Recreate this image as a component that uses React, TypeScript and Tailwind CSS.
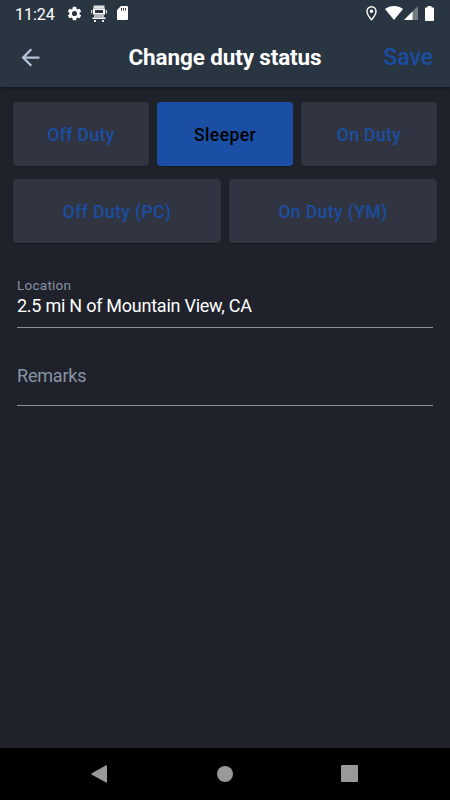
import { useState } from 'react';

const topRow = ['Off Duty', 'Sleeper', 'On Duty'];
const bottomRow = ['Off Duty (PC)', 'On Duty (YM)'];

interface DutyButtonProps {
  label: string;
  selected: boolean;
  onSelect: (label: string) => void;
}

function DutyButton({ label, selected, onSelect }: DutyButtonProps) {
  return (
    <button
      onClick={() => onSelect(label)}
      className={`h-16 flex-1 rounded-[4px] pt-[2px] text-[17.5px] font-medium tracking-[0.4px] shadow-[0_1px_1px_rgba(0,0,0,0.25)] ${
        selected ? 'bg-[#1a4fa5] text-black' : 'bg-[#303541] text-[#1b4ea2]'
      }`}
    >
      {label}
    </button>
  );
}

function StatusBar() {
  return (
    <div className="flex h-[26px] items-center pl-[15px] pr-4 text-white">
      <span className="w-[52px] pt-[3px] text-base leading-6">11:24</span>
      <svg className="-ml-px h-[17px] w-[17px]" viewBox="0 0 24 24" fill="currentColor">
        <path d="M19.14 12.94c.04-.3.06-.61.06-.94 0-.32-.02-.64-.07-.94l2.03-1.58a.49.49 0 0 0 .12-.61l-1.92-3.32a.49.49 0 0 0-.59-.22l-2.39.96c-.5-.38-1.03-.7-1.62-.94l-.36-2.54a.48.48 0 0 0-.48-.41h-3.84c-.24 0-.43.17-.47.41l-.36 2.54c-.59.24-1.13.57-1.62.94l-2.39-.96a.49.49 0 0 0-.59.22L2.74 8.87c-.12.21-.08.47.12.61l2.03 1.58c-.05.3-.09.63-.09.94s.02.64.07.94l-2.03 1.58a.49.49 0 0 0-.12.61l1.92 3.32c.12.22.37.29.59.22l2.39-.96c.5.38 1.03.7 1.62.94l.36 2.54c.05.24.24.41.48.41h3.84c.24 0 .44-.17.47-.41l.36-2.54c.59-.24 1.13-.56 1.62-.94l2.39.96c.22.08.47 0 .59-.22l1.92-3.32a.49.49 0 0 0-.12-.61zM12 15.6a3.6 3.6 0 1 1 0-7.2 3.6 3.6 0 0 1 0 7.2z" />
      </svg>
      {/* truck, seen from the front */}
      <svg className="ml-2 h-[17px] w-4" viewBox="0 0 16 17" fill="currentColor">
        <path d="M2.5 .5H13.5V3.5H2.5Z" opacity=".85" />
        <path d="M2 3.5H14V9.5H2ZM4 5V8H12V5Z" fillRule="evenodd" />
        <path d="M.2 5H1.2V8.5H.2ZM14.800 5H15.800V8.5H14.800Z" />
        <path d="M3 9.5H13V12.5H3Z" opacity=".65" />
        <path d="M1.5 12.5H14.5V14H1.5Z" />
        <path d="M3 15H5V17H3ZM11 15H13V17H11Z" opacity=".9" />
      </svg>
      <svg className="ml-[10px] h-[14px] w-[11px]" viewBox="0 0 11 14">
        <path d="M4 0H10a1 1 0 0 1 1 1V13a1 1 0 0 1-1 1H1a1 1 0 0 1-1-1V4Z" fill="currentColor" />
        <path d="M4.5 2V4.5M6.5 2V4.5M8.5 2V4.5" stroke="#293541" strokeWidth="1" />
      </svg>
      <svg className="ml-auto h-[15px] w-[11px]" viewBox="0 0 11 15" fill="none" stroke="currentColor">
        <path d="M5.5 .8A4.5 4.5 0 0 0 1 5.3C1 8.8 5.5 13.8 5.5 13.8S10 8.8 10 5.3A4.5 4.5 0 0 0 5.5 .8Z" strokeWidth="1.4" />
        <circle cx="5.5" cy="5.3" r="1.8" fill="currentColor" stroke="none" />
      </svg>
      <svg className="ml-[8px] h-[14px] w-[18px]" viewBox="0 0 18 14" fill="currentColor">
        <path d="M9 14L0 3C2.5 1 5.5 0 9 0s6.5 1 9 3Z" />
      </svg>
      <svg className="ml-[1px] h-[14px] w-[14px]" viewBox="0 0 14 14" fill="currentColor">
        <path d="M14 0V14H0Z" opacity=".35" />
        <path d="M8.5 5.5V14H0Z" />
      </svg>
      <svg className="ml-[7px] h-[15px] w-[9px]" viewBox="0 0 9 15" fill="currentColor">
        <path d="M2.5 0H6.5V1.5H8.3a.7.7 0 0 1 .7.7V14.3a.7.7 0 0 1-.7.7H.7a.7.7 0 0 1-.7-.7V2.2a.7.7 0 0 1 .7-.7H2.5Z" />
      </svg>
    </div>
  );
}

function App() {
  const [status, setStatus] = useState('Sleeper');

  return (
    <div className="flex h-[800px] w-[450px] flex-col overflow-hidden bg-[#1f222b] font-['Roboto','Liberation_Sans',sans-serif]">
      <header className="h-[87px] shrink-0 bg-[#293541] shadow-[0_1px_3px_rgba(0,0,0,0.45)]">
        <StatusBar />
        <div className="grid h-[62px] grid-cols-[1fr_auto_1fr] items-center px-[17px]">
          <button aria-label="Back" className="w-7 text-[#b5c4d8]">
            <svg className="h-[27px] w-[27px]" viewBox="0 0 24 24" fill="currentColor">
              <path d="M20 11H7.83l5.59-5.59L12 4l-8 8 8 8 1.41-1.41L7.83 13H20z" />
            </svg>
          </button>
          <h1 className="text-[22.5px] font-bold leading-7 tracking-[-0.13px] text-white">Change duty status</h1>
          <button className="justify-self-end pt-[2px] text-[23px] font-medium leading-7 text-[#1b4ea2]">Save</button>
        </div>
      </header>

      <main className="flex-1">
        <div className="flex flex-col gap-[13px] px-[13px] pt-[15px]">
          {[topRow, bottomRow].map((row) => (
            <div key={row[0]} className="flex gap-2">
              {row.map((label) => (
                <DutyButton key={label} label={label} selected={status === label} onSelect={setStatus} />
              ))}
            </div>
          ))}
        </div>

        <div className="mx-[17px] mt-[34px] h-[51px] border-b border-[#8f9093]">
          <div className="text-[13.5px] leading-4 tracking-[0.25px] text-[#8793a3]">Location</div>
          <div className="pt-px text-[18px] leading-6 tracking-[-0.25px] text-white">2.5 mi N of Mountain View, CA</div>
        </div>
        <div className="mx-[17px] mt-[36px] h-[42px] border-b border-[#8f9093] text-[18px] leading-6 tracking-[-0.2px] text-[#8793a3]">
          Remarks
        </div>
      </main>

      <nav className="grid h-[52px] shrink-0 grid-cols-3 items-center bg-black px-[37px] pb-px text-[#999999]">
        <svg className="ml-[54px] h-[18px] w-4" viewBox="0 0 16 18" fill="currentColor">
          <path d="M15 .2Q16 0 16 1V17Q16 18 15 17.5L.5 9.5Q0 9 .5 8.5Z" />
        </svg>
        <div className="h-4 w-4 justify-self-center rounded-full bg-[#999999]" />
        <div className="mr-[55px] h-[17px] w-[17px] justify-self-end rounded-[1px] bg-[#999999]" />
      </nav>
    </div>
  );
}

export default App;
